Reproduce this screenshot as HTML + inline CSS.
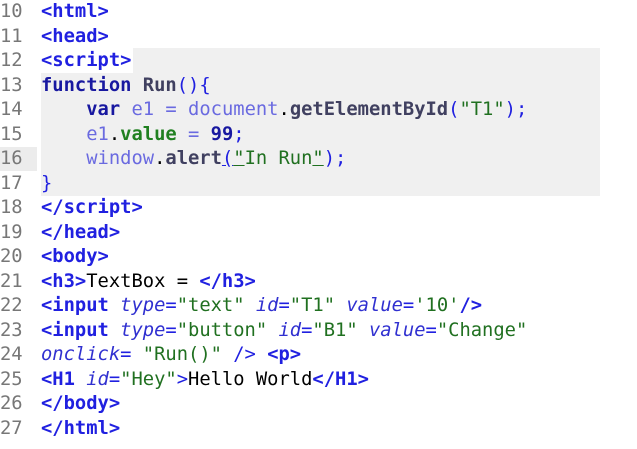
<!DOCTYPE html>
<html><head><meta charset="utf-8"><style>
body{margin:0;width:637px;height:449px;background:#fff;position:relative;overflow:hidden;font-family:"DejaVu Sans Mono","Liberation Mono",monospace;font-size:18.8px;}
.l{position:absolute;left:0;height:24.5px;line-height:24.5px;white-space:pre;}
.n{position:absolute;left:0;width:37px;color:#777;}
.c{position:absolute;left:41px;color:#000;}
.t{color:#2020e0;font-weight:bold}
.p{color:#2020e0}
.k{color:#1818a0;font-weight:bold}
.s{color:#207020}
.a{color:#3030d0;font-style:italic}
.d{color:#6a6ae0}
.m{color:#404060;font-weight:bold}
.v{color:#208020;font-weight:bold}
</style></head><body>
<div style="position:absolute;left:133px;top:48px;width:467px;height:25px;background:#f0f0f0"></div>
<div style="position:absolute;left:41px;top:73px;width:559px;height:123px;background:#f0f0f0"></div>
<div style="position:absolute;left:0;top:147px;width:37px;height:24px;background:#ececec"></div>
<div class="l" style="top:0"><span class="n">10</span><span class="c"><span class="t">&lt;html&gt;</span></span></div>
<div class="l" style="top:24.5px"><span class="n">11</span><span class="c"><span class="t">&lt;head&gt;</span></span></div>
<div class="l" style="top:49px"><span class="n">12</span><span class="c"><span class="t">&lt;script&gt;</span></span></div>
<div class="l" style="top:73.5px"><span class="n">13</span><span class="c"><span class="k">function</span> <span class="m">Run</span><span class="p">(){</span></span></div>
<div class="l" style="top:98px"><span class="n">14</span><span class="c">    <span class="k">var</span> <span class="d">e1</span> <span class="d">=</span> <span class="d">document</span>.<span class="m">getElementById</span><span class="p">(</span><span class="s">"T1"</span><span class="p">);</span></span></div>
<div class="l" style="top:122.5px"><span class="n">15</span><span class="c">    <span class="d">e1</span>.<span class="v">value</span> <span class="d">=</span> <span class="k">99</span><span class="p">;</span></span></div>
<div class="l" style="top:147px"><span class="n">16</span><span class="c">    <span class="d">window</span>.<span class="m">alert</span><span class="p" style="text-decoration:underline">(</span><span class="s"><span style="text-decoration:underline">"</span>In Run<span style="text-decoration:underline">"</span></span><span class="p">);</span></span></div>
<div class="l" style="top:171.5px"><span class="n">17</span><span class="c"><span class="p">}</span></span></div>
<div class="l" style="top:196px"><span class="n">18</span><span class="c"><span class="t">&lt;/script&gt;</span></span></div>
<div class="l" style="top:220.5px"><span class="n">19</span><span class="c"><span class="t">&lt;/head&gt;</span></span></div>
<div class="l" style="top:245px"><span class="n">20</span><span class="c"><span class="t">&lt;body&gt;</span></span></div>
<div class="l" style="top:269.5px"><span class="n">21</span><span class="c"><span class="t">&lt;h3&gt;</span>TextBox = <span class="t">&lt;/h3&gt;</span></span></div>
<div class="l" style="top:294px"><span class="n">22</span><span class="c"><span class="t">&lt;input</span> <span class="a">type</span><span class="p">=</span><span class="s">"text"</span> <span class="a">id</span><span class="p">=</span><span class="s">"T1"</span> <span class="a">value</span><span class="p">=</span><span class="s">'10'</span><span class="t">/&gt;</span></span></div>
<div class="l" style="top:318.5px"><span class="n">23</span><span class="c"><span class="t">&lt;input</span> <span class="a">type</span><span class="p">=</span><span class="s">"button"</span> <span class="a">id</span><span class="p">=</span><span class="s">"B1"</span> <span class="a">value</span><span class="p">=</span><span class="s">"Change"</span></span></div>
<div class="l" style="top:343px"><span class="n">24</span><span class="c"><span class="a">onclick</span><span class="p">=</span> <span class="s">"Run()"</span> <span class="p">/&gt;</span> <span class="t">&lt;p&gt;</span></span></div>
<div class="l" style="top:367.5px"><span class="n">25</span><span class="c"><span class="t">&lt;H1</span> <span class="a">id</span><span class="p">=</span><span class="s">"Hey"</span><span class="p">&gt;</span>Hello World<span class="t">&lt;/H1&gt;</span></span></div>
<div class="l" style="top:392px"><span class="n">26</span><span class="c"><span class="t">&lt;/body&gt;</span></span></div>
<div class="l" style="top:416.5px"><span class="n">27</span><span class="c"><span class="t">&lt;/html&gt;</span></span></div>
</body></html>
